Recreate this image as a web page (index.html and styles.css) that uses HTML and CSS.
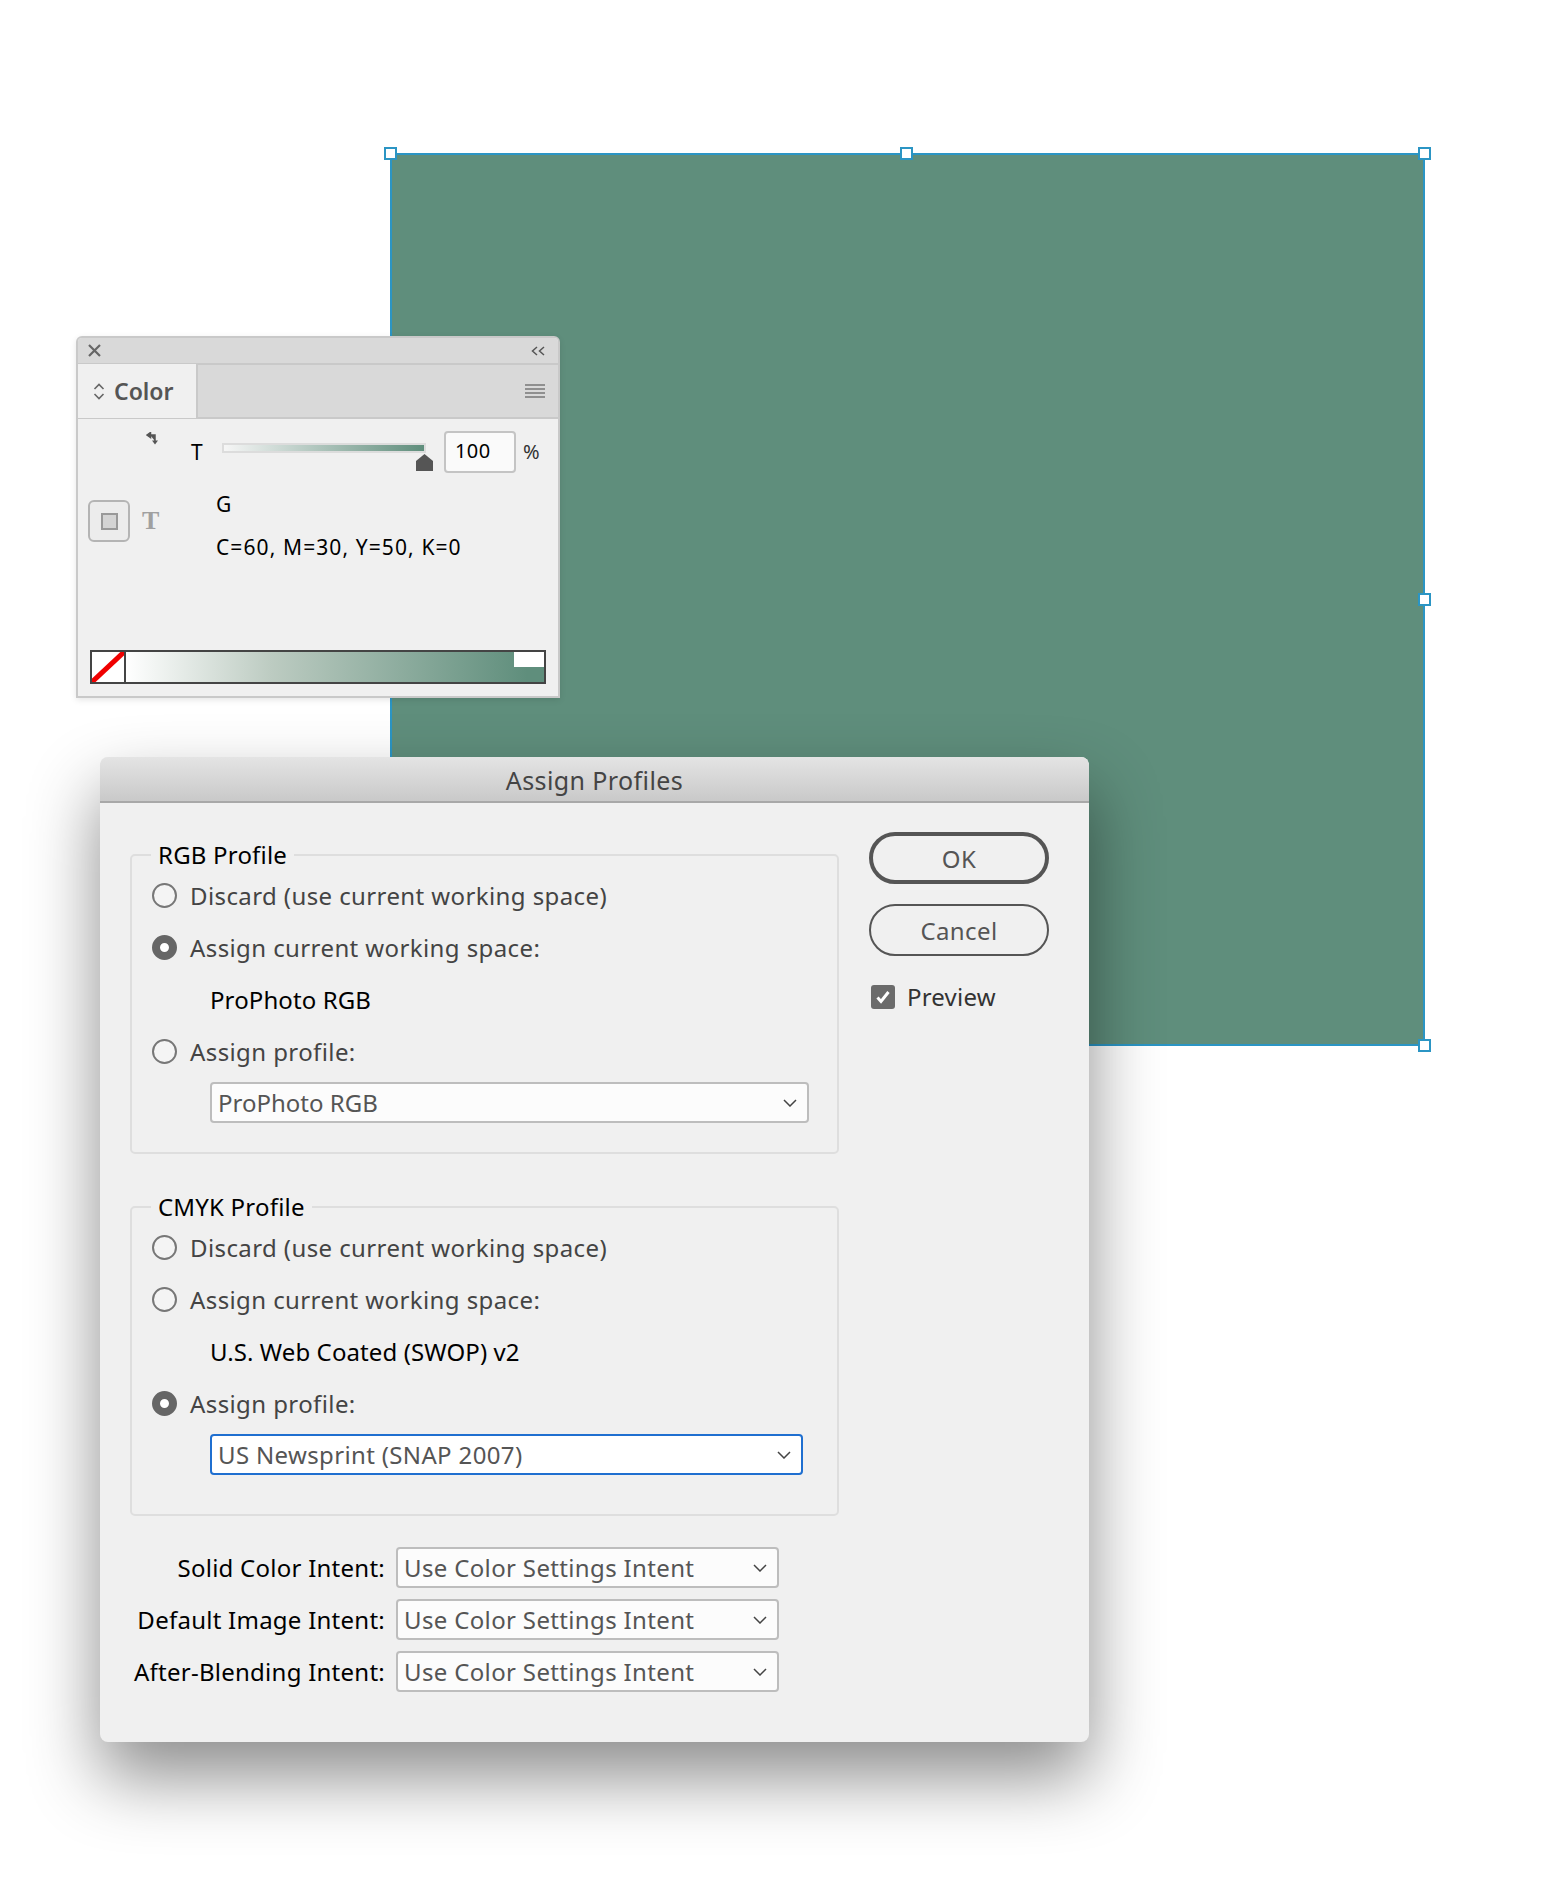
FILE: index.html
```html
<!DOCTYPE html>
<html lang="en">
<head>
    <meta charset="UTF-8">
    <meta name="viewport" content="width=device-width, initial-scale=1.0">
    <title>Assign Profiles</title>
    <link rel="stylesheet" href="styles.css">
</head>
<body>
    <!-- selected frame on the canvas -->
    <div class="frame">
        <span class="handle handle-tl"></span>
        <span class="handle handle-tc"></span>
        <span class="handle handle-tr"></span>
        <span class="handle handle-mr"></span>
        <span class="handle handle-br"></span>
    </div>

    <!-- Color panel -->
    <div class="panel">
        <div class="panel-top">
            <svg class="panel-close" width="13" height="13" viewBox="0 0 13 13"><path d="M1 1l11 11M12 1L1 12" stroke="#666" stroke-width="2.200" fill="none"/></svg>
            <svg class="panel-collapse" width="14" height="10" viewBox="0 0 14 10"><path d="M6 1L1.500 5 6 9M13 1L8.500 5l4.500 4" stroke="#555" stroke-width="1.500" fill="none"/></svg>
        </div>
        <div class="panel-tabs">
            <div class="tab">
                <svg width="12" height="17" viewBox="0 0 12 17"><path d="M1.500 6L6 1.500 10.500 6M1.500 11L6 15.500 10.500 11" stroke="#666" stroke-width="1.600" fill="none"/></svg>
                <span>Color</span>
            </div>
            <svg class="panel-menu" width="20" height="14" viewBox="0 0 20 14"><path d="M0 1h20M0 5h20M0 9h20M0 13h20" stroke="#777" stroke-width="1.500"/></svg>
        </div>
        <div class="tint-row">
            <svg class="swap" width="13" height="13" viewBox="0 0 13 13"><path d="M1 3l3.500-2.500v5zM4 3h5v6" stroke="#555" stroke-width="1.500" fill="#555"/><path d="M6 8.500h6L9 12.500z" fill="#555"/></svg>
            <span class="tint-label">T</span>
            <div class="slider">
                <svg class="thumb" width="17" height="17" viewBox="0 0 17 17"><path d="M8.500 0L17 7v10H0V7z" fill="#555"/></svg>
            </div>
            <div class="tint-value">100</div>
            <span class="percent">%</span>
        </div>
        <div class="swatch-row">
            <div class="fill-box"><span></span></div>
            <span class="serif-t">T</span>
            <div class="swatch-text">
                <div>G</div>
                <div>C=60, M=30, Y=50, K=0</div>
            </div>
        </div>
        <div class="ramp">
            <div class="ramp-none">
                <svg width="32" height="30" viewBox="0 0 32 30"><path d="M0 30L32 0" stroke="#f00000" stroke-width="5"/></svg>
            </div>
            <div class="ramp-fill"></div>
            <span class="ramp-patch"></span>
        </div>
    </div>

    <!-- Assign Profiles dialog -->
    <div class="dialog">
        <div class="dialog-title">Assign Profiles</div>
        <div class="dialog-body">
            <div class="dialog-main">
                <fieldset class="group">
                    <legend>RGB Profile</legend>
                    <div class="option"><span class="radio"></span>Discard (use current working space)</div>
                    <div class="option"><span class="radio on"></span>Assign current working space:</div>
                    <div class="option name">ProPhoto RGB</div>
                    <div class="option"><span class="radio"></span>Assign profile:</div>
                    <div class="select profile-select">
                        <span class="tight">ProPhoto RGB</span>
                        <svg width="14" height="8" viewBox="0 0 14 8"><path d="M1 1l6 6 6-6" stroke="#444" stroke-width="1.500" fill="none"/></svg>
                    </div>
                </fieldset>

                <fieldset class="group group-cmyk">
                    <legend>CMYK Profile</legend>
                    <div class="option"><span class="radio"></span>Discard (use current working space)</div>
                    <div class="option"><span class="radio"></span>Assign current working space:</div>
                    <div class="option name">U.S. Web Coated (SWOP) v2</div>
                    <div class="option"><span class="radio on"></span>Assign profile:</div>
                    <div class="select profile-select focused">
                        <span>US Newsprint (SNAP 2007)</span>
                        <svg width="14" height="8" viewBox="0 0 14 8"><path d="M1 1l6 6 6-6" stroke="#444" stroke-width="1.500" fill="none"/></svg>
                    </div>
                </fieldset>

                <div class="intents">
                    <div class="intent">
                        <label>Solid Color Intent:</label>
                        <div class="select">
                            <span>Use Color Settings Intent</span>
                            <svg width="14" height="8" viewBox="0 0 14 8"><path d="M1 1l6 6 6-6" stroke="#444" stroke-width="1.500" fill="none"/></svg>
                        </div>
                    </div>
                    <div class="intent">
                        <label>Default Image Intent:</label>
                        <div class="select">
                            <span>Use Color Settings Intent</span>
                            <svg width="14" height="8" viewBox="0 0 14 8"><path d="M1 1l6 6 6-6" stroke="#444" stroke-width="1.500" fill="none"/></svg>
                        </div>
                    </div>
                    <div class="intent">
                        <label>After-Blending Intent:</label>
                        <div class="select">
                            <span>Use Color Settings Intent</span>
                            <svg width="14" height="8" viewBox="0 0 14 8"><path d="M1 1l6 6 6-6" stroke="#444" stroke-width="1.500" fill="none"/></svg>
                        </div>
                    </div>
                </div>
            </div>

            <div class="dialog-side">
                <button class="btn btn-default">OK</button>
                <button class="btn">Cancel</button>
                <div class="preview">
                    <span class="check">
                        <svg width="16" height="14" viewBox="0 0 16 14"><path d="M2.500 7.500l3.500 4L13.500 2" stroke="#fff" stroke-width="3" fill="none"/></svg>
                    </span>
                    Preview
                </div>
            </div>
        </div>
    </div>
</body>
</html>
```

FILE: styles.css
```css
html, body {
    margin: 0;
    height: 1886px;
    background-color: #fff;
}

body {
    position: relative;
    overflow: hidden;
    font-family: "Noto Sans", "Liberation Sans", sans-serif;
    font-size: 24px;
    color: #000;
}

/* canvas frame */
.frame {
    position: absolute;
    left: 390px;
    top: 153px;
    box-sizing: border-box;
    width: 1035px;
    height: 893px;
    background-color: #5f8e7c;
    border: 2px solid #2b95c4;
}

.handle {
    position: absolute;
    box-sizing: border-box;
    width: 13px;
    height: 13px;
    background-color: #fff;
    border: 2px solid #2b95c4;
}

.handle-tl { left: -8px; top: -8px; }
.handle-tc { left: 508px; top: -8px; }
.handle-tr { right: -8px; top: -8px; }
.handle-mr { right: -8px; top: 438px; }
.handle-br { right: -8px; bottom: -8px; }

/* color panel */
.panel {
    position: absolute;
    left: 76px;
    top: 336px;
    box-sizing: border-box;
    display: flex;
    flex-direction: column;
    width: 484px;
    height: 362px;
    background-color: #f0f0f0;
    border: 2px solid #c9c9c9;
    border-radius: 6px 6px 0 0;
    box-shadow: 0 2px 6px rgba(0, 0, 0, 0.1);
}

.panel-top {
    display: flex;
    align-items: center;
    justify-content: space-between;
    box-sizing: border-box;
    height: 27px;
    padding: 0 13px 0 10px;
    background-color: #d9d9d9;
    border-bottom: 2px solid #c9c9c9;
    border-radius: 4px 4px 0 0;
}

.panel-tabs {
    display: flex;
    align-items: center;
    justify-content: space-between;
    box-sizing: border-box;
    height: 54px;
    padding-right: 13px;
    background-color: #d9d9d9;
    border-bottom: 2px solid #c9c9c9;
}

.tab {
    display: flex;
    align-items: center;
    gap: 9px;
    box-sizing: border-box;
    width: 120px;
    height: 54px;
    padding: 0 0 0 15px;
    background-color: #f0f0f0;
    border-right: 2px solid #c9c9c9;
    font-size: 23px;
    font-weight: 600;
    color: #555;
}

.tint-row {
    display: flex;
    align-items: flex-start;
    padding-top: 12px;
    height: 42px;
}

.swap {
    margin: 1px 0 0 68px;
}

.tint-label {
    margin-left: 32px;
    width: 31px;
    font-size: 21px;
    line-height: 42px;
}

.slider {
    position: relative;
    box-sizing: border-box;
    margin-top: 12px;
    width: 204px;
    height: 10px;
    background: linear-gradient(to right, #f6f6f6, #5f8e7c);
    border: 2px solid #dcdcdc;
}

.thumb {
    position: absolute;
    left: 192px;
    top: 9px;
}

.tint-value {
    box-sizing: border-box;
    margin-left: 18px;
    padding-left: 9px;
    width: 72px;
    height: 42px;
    background-color: #fafafa;
    border: 2px solid #c4c4c4;
    border-radius: 4px;
    font-size: 20px;
    letter-spacing: 0.4px;
    line-height: 36px;
}

.percent {
    margin-left: 7px;
    font-size: 20px;
    line-height: 42px;
    color: #333;
}

.swatch-row {
    display: flex;
    align-items: flex-start;
    flex: 1;
}

.fill-box {
    display: flex;
    align-items: center;
    justify-content: center;
    box-sizing: border-box;
    margin: 27px 0 0 10px;
    width: 42px;
    height: 42px;
    background-color: #ececec;
    border: 2px solid #b4b4b4;
    border-radius: 6px;
}

.fill-box span {
    box-sizing: border-box;
    width: 17px;
    height: 17px;
    background-color: #d4d4d4;
    border: 2px solid #999;
}

.serif-t {
    margin: 33px 0 0 12px;
    width: 16px;
    font-family: "Liberation Serif", serif;
    font-size: 26px;
    font-weight: 700;
    line-height: 30px;
    color: #a0a0a0;
}

.swatch-text {
    margin: 10px 0 0 58px;
    font-size: 21px;
    letter-spacing: 1.1px;
    line-height: 43px;
    white-space: nowrap;
}

.ramp {
    position: relative;
    display: flex;
    box-sizing: border-box;
    margin: 0 0 12px 12px;
    width: 456px;
    height: 34px;
    border: 2px solid #444;
}

.ramp-none {
    box-sizing: border-box;
    width: 34px;
    height: 30px;
    background-color: #fff;
    border-right: 2px solid #444;
}

.ramp-none svg {
    display: block;
}

.ramp-fill {
    flex: 1;
    background: linear-gradient(to right, #fff, #bccbc1 35%, #5f8e7c 96%);
}

.ramp-patch {
    position: absolute;
    right: 0;
    top: 0;
    width: 30px;
    height: 15px;
    background-color: #fff;
}

/* dialog */
.dialog {
    position: absolute;
    left: 100px;
    top: 757px;
    width: 989px;
    height: 985px;
    background-color: #f0f0f0;
    border-radius: 8px;
    box-shadow: 0 35px 70px rgba(0, 0, 0, 0.45);
    letter-spacing: 0.4px;
}

.dialog-title {
    box-sizing: border-box;
    height: 46px;
    background: linear-gradient(to bottom, #e4e4e4, #c9c9c9);
    border-bottom: 2px solid #a8a8a8;
    border-radius: 8px 8px 0 0;
    font-size: 25px;
    letter-spacing: 0.4px;
    line-height: 46px;
    text-align: center;
    color: #444;
}

.dialog-body {
    display: flex;
    padding: 38px 0 0 30px;
}

.dialog-main {
    width: 709px;
}

.group {
    box-sizing: border-box;
    margin: 0 0 39px;
    padding: 0 0 29px 20px;
    min-width: 0;
    border: 2px solid #dedede;
    border-radius: 5px;
}

.group legend {
    margin-left: -1px;
    padding: 0 7px;
    letter-spacing: 0.2px;
    line-height: 28px;
}

.group-cmyk {
    margin-bottom: 31px;
    padding-bottom: 39px;
}

.option {
    display: flex;
    align-items: center;
    gap: 13px;
    height: 52px;
    color: #444;
}

.name {
    padding-left: 58px;
    letter-spacing: 0.1px;
    color: #000;
}

.radio {
    box-sizing: border-box;
    width: 25px;
    height: 25px;
    background-color: #f4f4f4;
    border: 2px solid #777;
    border-radius: 50%;
}

.radio.on {
    background-color: #fff;
    border: 8px solid #666;
}

.select {
    display: flex;
    align-items: center;
    justify-content: space-between;
    box-sizing: border-box;
    padding: 0 10px 0 6px;
    width: 383px;
    height: 41px;
    background-color: #fcfcfc;
    border: 2px solid #bdbdbd;
    border-radius: 4px;
    letter-spacing: 0.35px;
    color: #555;
}

.tight {
    letter-spacing: 0;
}

.profile-select {
    margin: 5px 0 0 58px;
    width: 599px;
}

.focused {
    width: 593px;
    background-color: #fff;
    border-color: #1f6fd0;
}

.intents {
    display: flex;
    flex-direction: column;
    gap: 11px;
}

.intent {
    display: flex;
    align-items: center;
    gap: 11px;
}

.intent label {
    width: 255px;
    letter-spacing: 0.25px;
    text-align: right;
    white-space: nowrap;
}

.dialog-side {
    display: flex;
    flex-direction: column;
    align-items: flex-start;
    margin: -9px 0 0 30px;
}

.btn {
    box-sizing: border-box;
    margin-bottom: 20px;
    width: 180px;
    height: 52px;
    background-color: #f0f0f0;
    border: 2px solid #555;
    border-radius: 26px;
    font: inherit;
    letter-spacing: inherit;
    color: #555;
}

.btn-default {
    border-width: 4px;
}

.preview {
    display: flex;
    align-items: center;
    gap: 12px;
    margin: 4px 0 0 2px;
    letter-spacing: 0.2px;
    color: #333;
}

.check {
    display: flex;
    align-items: center;
    justify-content: center;
    width: 24px;
    height: 24px;
    background-color: #6b6b6b;
    border-radius: 3px;
}
```
